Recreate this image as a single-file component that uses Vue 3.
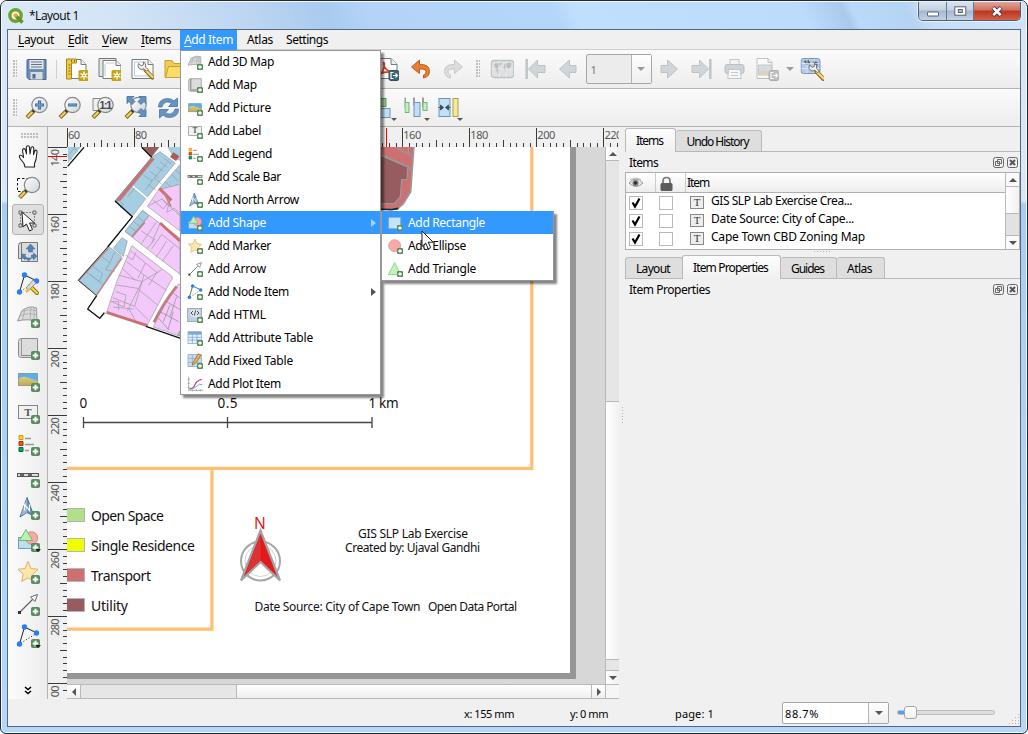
<script setup>
const vFit = {
  mounted(el, { value }) {
    const n = el.textContent.length
    const natural = el.getBoundingClientRect().width
    if (n) el.style.letterSpacing = (value - natural) / n + 'px'
  }
}

const menubar = [
  { a: 'L', b: 'ayout', w: 36, s: 50 },
  { a: 'E', b: 'dit', w: 20, s: 34 },
  { a: 'V', b: 'iew', w: 25, s: 39 },
  { a: 'I', b: 'tems', w: 30, s: 49 },
  { a: 'A', b: 'dd Item', w: 49, s: 56, on: true },
  { a: '', b: 'Atlas', w: 26, s: 47 },
  { a: '', b: 'Settings', w: 42, s: 60 }
]

const addItems = [
  ['map3d', 'Add 3D Map', 66], ['map', 'Add Map', 49], ['picture', 'Add Picture', 63],
  ['label', 'Add Label', 53], ['legend', 'Add Legend', 64], ['scale', 'Add Scale Bar', 73],
  ['north', 'Add North Arrow', 91], ['shape', 'Add Shape', 58, 'sub on'], ['marker', 'Add Marker', 63],
  ['arrow', 'Add Arrow', 58], ['node', 'Add Node Item', 81, 'sub'], ['html', 'Add HTML', 58],
  ['table', 'Add Attribute Table', 105], ['fixed', 'Add Fixed Table', 85], ['plot', 'Add Plot Item', 73]
]
const shapes = [
  ['rect', 'Add Rectangle', 77, 'on'], ['ellipse', 'Add Ellipse', 58], ['triangle', 'Add Triangle', 68]
]
const tools = ['hand', 'zoomtool', 'select', 'move', 'editnodes', 'map3d', 'map', 'picture', 'label', 'legend', 'scale', 'north', 'shape', 'marker', 'arrow', 'node']
const layers = [['GIS SLP Lab Exercise Crea...', 141], ['Date Source: City of Cape...', 143], ['Cape Town CBD Zoning Map', 154]]

const ticks = []
for (let i = 0; i < 84; i++) ticks.push({ p: 0.5 + i * 6.705, len: i % 10 === 0 ? 19 : i % 5 === 0 ? 7 : 4 })
const xNums = [60, 80, 160, 180, 200, 220].map((n) => ({ n, p: ((n - 60) / 20) * 67.05 }))
const yNums = [140, 160, 180, 200, 220, 240, 260, 280, 300].map((n, i) => ({ n, p: i * 67.05 }))
const legend = [
  { c: '#b2df8a', t: 'Open Space', w: 73, y: 508.5 }, { c: '#eeff00', t: 'Single Residence', w: 104, y: 538.5 },
  { c: '#cd7071', t: 'Transport', w: 60, y: 568.5 }, { c: '#965c60', t: 'Utility', w: 37, y: 598.5 }
]
</script>

<template>
  <div class="window">
    <svg class="defs" width="0" height="0">
      <defs>
        <linearGradient id="lens" x1="0" y1="0" x2="1" y2="1"><stop offset="0" stop-color="#fff" /><stop offset="1" stop-color="#cfd3d6" /></linearGradient>
        <linearGradient id="sand" x1="0" y1="0" x2="0" y2="1"><stop offset="0" stop-color="#d8cb84" /><stop offset="1" stop-color="#c2a94e" /></linearGradient>
        <symbol id="badge" viewBox="0 0 24 24"><rect x="15" y="15" width="9" height="9" rx="1.8" fill="#5b8d5c" /><path d="M19.5 16.7v5.6M16.7 19.5h5.6" stroke="#fff" stroke-width="2" /></symbol>
        <symbol id="star" viewBox="0 0 24 24"><rect x="14" y="13" width="11" height="11" rx="1.5" fill="#c6a312" /><path d="M19.5 14.5v8M16 16.5l7 4M16 20.5l7-4" stroke="#fff" stroke-width="1.3" /><circle cx="19.5" cy="18.5" r="1.9" fill="#fff" /><circle cx="19.5" cy="18.5" r=".8" fill="#c6a312" /></symbol>
        <symbol id="export" viewBox="0 0 24 24"><rect x="13.500" y="13.500" width="10" height="10" rx="2" fill="#3f6578" stroke="#2f4f5f" /><path d="M18 15.500h-2.500v6h2.500M17.500 18.500h4.500M20 16.500l2 2l-2 2" fill="none" stroke="#fff" stroke-width="1.200" /></symbol>
        <symbol id="save" viewBox="0 0 24 24"><path d="M2.500 3.500q0-1 1-1h18v20h-17l-2-2z" fill="#6a8db3" stroke="#46678c" /><path d="M5 3h14v9H5z" fill="#e4e8ec" /><path d="M6.500 5h11M6.500 7.500h11M6.500 10h11" stroke="#68727e" /><path d="M6 15h12v7.500H6z" fill="#d7dbe0" /><path d="M8 17h3v4.500H8z" fill="#4e6c8f" /></symbol>
        <symbol id="newlayout" viewBox="0 0 24 24"><path d="M2.500 2.500h14l5 5v14h-19z" fill="#fff" stroke="#77797a" /><path d="M16.500 2.500v5h5" fill="#eee" stroke="#77797a" /><path d="M2 2h10v4H7v16H2z" fill="#eccb42" stroke="#a78816" /><path d="M4 8h2M4 11h2M4 14h2M4 17h2M7 3v2M10 3v2" stroke="#8a7010" /><use href="#star" /></symbol>
        <symbol id="duplicate" viewBox="0 0 24 24"><path d="M1.500 1.500h17v18h-17z" fill="#e6e6e6" stroke="#77797a" /><path d="M5.500 3.500h13l5 5v13h-18z" fill="#fff" stroke="#77797a" /><path d="M18.500 3.500v5h5" fill="#eee" stroke="#77797a" /><path d="M8 6h9M7.500 7v12" stroke="#bcc8d8" /><use href="#star" /></symbol>
        <symbol id="wrench" viewBox="0 0 24 24"><path d="M15 13l7 7.500" stroke="#927018" stroke-width="4.200" stroke-linecap="round" /><path d="M15.500 13.500l6.500 6.500" stroke="#f0d878" stroke-width="2.300" stroke-linecap="round" /><path d="M8 6.500q-1.500 4 1.500 5.500q2 1 4-.2l2.500 2.500l1.700-1.700l-2.600-2.600q.9-3.500-2-5.200l-.4 3.200l-2 .8z" fill="#eee" stroke="#666" stroke-width=".9" /></symbol>
        <symbol id="manager" viewBox="0 0 24 24"><path d="M1.500 2.500h16l5 5v14h-21z" fill="#fff" stroke="#77797a" /><path d="M17.500 2.500v5h5" fill="#eee" stroke="#77797a" /><path d="M4 5h12M4 5v14h15" fill="none" stroke="#b5c9e2" /><use href="#wrench" /></symbol>
        <symbol id="folder" viewBox="0 0 24 24"><path d="M1.500 20.500v-17h7l2 3h12v14z" fill="#f0cc55" stroke="#c7a02e" /><path d="M2 20.500l3-11h19l-3 11z" fill="#fadb6c" stroke="#c7a02e" /></symbol>
        <symbol id="pdf" viewBox="0 0 24 24"><path d="M1.500 1.500h14l6 6v14h-20z" fill="#fff" stroke="#77797a" /><path d="M15.500 1.500v6h6" fill="#eee" stroke="#77797a" /><path d="M3 19q5-3 6-12q-1-4-1 0q2 7 8 8q-6-.5-13 2" fill="none" stroke="#e0402a" stroke-width="1.600" /><use href="#export" /></symbol>
        <symbol id="undo" viewBox="0 0 24 24"><path d="M3 10l8-7v4.500q10-.5 10 7q0 5-6 6.500v-3q3-1 2.500-3.500q-.5-3-6.500-2.500v4.500z" fill="#e57f35" stroke="#bd5d1b" stroke-linejoin="round" /></symbol>
        <symbol id="redo" viewBox="0 0 24 24"><path d="M21 10l-8-7v4.500q-10-.5-10 7q0 5 6 6.500v-3q-3-1-2.500-3.500q.5-3 6.500-2.500v4.500z" fill="#dadddc" stroke="#c8cbca" stroke-linejoin="round" /></symbol>
        <symbol id="atlas" viewBox="0 0 24 24"><rect x=".7" y="3.500" width="22.600" height="17" rx="3" fill="#dee0e2" stroke="#bfc2c4" stroke-width="1.300" /><path d="M3.500 7l4-1h4l-2 3l-2 1l1 4l-1 3l-2-4zM14 7l3-1h4l-1 4l-2 2l-2-2l-1 5l-2-4z" fill="#b9bec1" /><path d="M8.500 4v16M15.500 4v16M1 12h22" stroke="#eceeee" stroke-width=".8" /></symbol>
        <symbol id="prev" viewBox="0 0 24 24"><path d="M3 12l10-9v5.500h6.500v7H13V21z" fill="#d0d5d9" stroke="#bcc3c8" stroke-linejoin="round" /></symbol>
        <symbol id="next" viewBox="0 0 24 24"><path d="M21 12l-10-9v5.500H4.500v7H11V21z" fill="#d0d5d9" stroke="#bcc3c8" stroke-linejoin="round" /></symbol>
        <symbol id="first" viewBox="0 0 24 24"><path d="M5 12l9-9v5.500h7.500v7H14V21z" fill="#d0d5d9" stroke="#bcc3c8" /><path d="M3.200 2v20" stroke="#bfc5c9" stroke-width="2.500" /></symbol>
        <symbol id="last" viewBox="0 0 24 24"><path d="M19 12l-9-9v5.500H2.500v7H10V21z" fill="#d0d5d9" stroke="#bcc3c8" /><path d="M20.800 2v20" stroke="#bfc5c9" stroke-width="2.500" /></symbol>
        <symbol id="print" viewBox="0 0 24 24"><rect x="7.500" y="2.500" width="9" height="6" fill="#f4f4f4" stroke="#c2c5c7" /><rect x="2.500" y="7.500" width="19" height="9" rx="2" fill="#ced3d8" stroke="#babfc3" /><path d="M6 12.500h12l.7 9H5.300z" fill="#f7f7f7" stroke="#c2c5c7" /><path d="M8.500 15.500h7M8.500 18.500h7" stroke="#c9c9c9" /></symbol>
        <symbol id="exportimg" viewBox="0 0 24 24"><g opacity=".42"><path d="M1.500 1.500h11l4 4v16h-15z" fill="#fff" stroke="#777" /><path d="M12.500 1.500v4h4" fill="none" stroke="#777" /><path d="M3 8h13v10H3z" fill="#a7bdd0" stroke="#888" /><path d="M3 15l6-2l7 2v3H3z" fill="#b9a672" /><rect x="13.500" y="13.500" width="10" height="10" rx="2" fill="#777" stroke="#555" /><path d="M18 15.500h-2.500v6h2.500M17.500 18.500h4.500M20 16.500l2 2l-2 2" fill="none" stroke="#fff" stroke-width="1.200" /></g></symbol>
        <symbol id="atlasset" viewBox="0 0 24 24"><rect x=".5" y="1.500" width="19" height="15" rx="2.500" fill="#b4cbe8" stroke="#7797bd" /><path d="M3 4l5-1l2 3l-4 2zM12 4l5 1v4l-2 2z" fill="#536475" /><path d="M6.500 2v14M13.500 2v14M1 6.500h18M1 11.500h18" stroke="#e7f0fa" stroke-width=".7" /><g transform="translate(1 1.500)"><use href="#wrench" /></g></symbol>
        <symbol id="glass" viewBox="0 0 24 24"><path d="M9.500 14.500l-7 7" stroke="#7b641b" stroke-width="4" /><path d="M8 16l-5 5" stroke="#f3d35c" stroke-width="2.200" /><path d="M10.500 13.500l-2 2" stroke="#222" stroke-width="3" /><circle cx="15" cy="9" r="7.700" fill="url(#lens)" stroke="#858a8c" stroke-width="1.200" /></symbol>
        <symbol id="zoomin" viewBox="0 0 24 24"><use href="#glass" /><path d="M15 4.500v9M10.500 9h9" stroke="#3c6c9f" stroke-width="3.200" /><path d="M15 5.200v7.600M11.200 9h7.600" stroke="#6b9acb" stroke-width="1.600" /></symbol>
        <symbol id="zoomout" viewBox="0 0 24 24"><use href="#glass" /><path d="M10.500 9h9" stroke="#3c6c9f" stroke-width="3.200" /><path d="M11.200 9h7.600" stroke="#6b9acb" stroke-width="1.600" /></symbol>
        <symbol id="zoom100" viewBox="0 0 24 24"><path d="M2.500 2.500h17v12h-17z" fill="#eee" stroke="#8a8a8a" /><use href="#glass" /><text x="9" y="12.500" font-family="Liberation Sans" font-weight="bold" font-size="10.500" textLength="12.500" fill="#444">1:1</text></symbol>
        <symbol id="zoomfull" viewBox="0 0 24 24"><use href="#glass" /><path d="M3.500.500h7l-2 2l3 3l-3 3l-3-3l-2 2zM22.500.500v7l-2-2l-3 3l-3-3l3-3l-2-2zM22.500 20.500h-7l2-2l-3-3l3-3l3 3l2-2z" fill="#6392c1" stroke="#436d9c" stroke-width=".8" /></symbol>
        <symbol id="refresh" viewBox="0 0 24 24"><path d="M2 11q0-8 9-8.500q4 0 6.500 2.500L21 2v8.500h-9l3-3q-2-2-5-1.500Q6 7 5.500 11zM22 13q0 8-9 8.500q-4 0-6.500-2.500L3 22v-8.500h9l-3 3q2 2 5 1.500q4-1 4.500-5z" fill="#6794c3" stroke="#4674a5" stroke-width=".8" /></symbol>
        <symbol id="align" viewBox="0 0 24 24"><rect x="5.500" y="2.500" width="9" height="8" fill="#9cd09c" stroke="#649564" /><rect x="5.500" y="12.500" width="13" height="9" fill="#bfe0f6" stroke="#7295b1" /></symbol>
        <symbol id="distribute" viewBox="0 0 24 24"><path d="M.5 1.500v10M9.500 1.500v8M18.500 1.500v10" stroke="#444" /><rect x=".5" y="6.500" width="4" height="10" fill="#c3f0bf" stroke="#79b178" /><rect x="9.500" y="6.500" width="6" height="14" fill="#c0def4" stroke="#7295b1" /><rect x="18.500" y="6.500" width="4" height="8" fill="#c3f0bf" stroke="#79b178" /></symbol>
        <symbol id="resize" viewBox="0 0 24 24"><rect x="1.500" y="2.500" width="11" height="18" fill="#c0e0fa" stroke="#6f93af" /><rect x="15.500" y="2.500" width="5" height="18" fill="#f1ea99" stroke="#a7a04e" /><path d="M1 11.500h4M9 11.500h4M3 9l3 2.500L3 14zM11 9l-3 2.500l3 2.500z" stroke="#3e4c57" fill="#3e4c57" stroke-width=".9" /></symbol>
        <symbol id="hand" viewBox="0 0 24 24"><path d="M9 23l-1-3.500L4.500 15Q2.500 12 4 11.300q1.600-.6 3.600 2.200L6.500 6.500q0-1.800 1.400-1.900q1.200 0 1.600 1.800L10.500 10l-.2-6.500q.2-1.800 1.600-1.800t1.600 1.700l.5 6.600L15 4q.4-1.500 1.600-1.200t1.200 1.800l-.3 6L18.800 7q.7-1.200 1.600-.8t.6 1.800L20 15.500l-1.500 4V23z" fill="#fff" stroke="#222" stroke-width="1.100" stroke-linejoin="round" /></symbol>
        <symbol id="zoomtool" viewBox="0 0 24 24"><path d="M1.500 2.500h13v13h-13z" fill="none" stroke="#111" stroke-dasharray="2.500 2" /><g transform="translate(1 0)"><use href="#glass" /></g></symbol>
        <symbol id="select" viewBox="0 0 24 24"><path d="M4.500 4.500h14v13h-14z" fill="none" stroke="#333" stroke-dasharray="1 2" /><path d="M3 3h3v3H3zM17 3h3v3h-3zM3 16h3v3H3zM17 16h3v3h-3z" fill="#e6e6e6" stroke="#555" stroke-width=".9" /><path d="M6 4l1 15l3.500-3l3 7l3-1.500l-3-6.500h5z" fill="#fff" stroke="#222" stroke-linejoin="round" /></symbol>
        <symbol id="move" viewBox="0 0 24 24"><path d="M5.500 2.500h16v19h-16zM5.500 2.500q-3 0-3 3v13h3" fill="#dadada" stroke="#777" /><path d="M14.500 4l4.500 5h-2.500v3h-4V9H10zM6 14l4 .5l-1.200 1.200l2 2l-2 2l-2-2L5.500 19zM21 16l-3.500-3v2h-2v3h2v2zM12.500 21l-3-3h6z" fill="#4c83ba" stroke="#39658e" stroke-width=".5" /></symbol>
        <symbol id="nodes" viewBox="0 0 24 24"><path d="M3.500 20L8.500 3L21 9" fill="none" stroke="#222" /><path d="M21 9L3.500 20" stroke="#222" stroke-dasharray="1 2" /><circle cx="3.500" cy="20" r="2.700" fill="#2b7cf5" /><circle cx="8.500" cy="3" r="2.700" fill="#2b7cf5" /><circle cx="20.500" cy="9" r="2.700" fill="#2b7cf5" /></symbol>
        <symbol id="editnodes" viewBox="0 0 24 24"><use href="#nodes" /><path d="M14 14l7 7" stroke="#8d6a10" stroke-width="4" stroke-linecap="round" /><path d="M14 14l7 7" stroke="#f6ce35" stroke-width="2.400" stroke-linecap="round" /><path d="M10 16l7-8l3 3l-7 7z" fill="#d8d8d8" stroke="#888" stroke-width=".8" /><path d="M10 20l3-3" stroke="#efbc32" stroke-width="2.500" /></symbol>
        <symbol id="map3d" viewBox="0 0 24 24"><path d="M1.500 17L6 6.500Q14 1 20.500 4l.5 14q-8-4-19.500-1z" fill="#dadada" stroke="#9a9a9a" /><path d="M4 12q8-4 17-1M5.500 8q8-4 15.500-1M9 5L6.500 16M15 4l-1 12M18 4v13" fill="none" stroke="#aaa" stroke-width=".8" /><use href="#badge" /></symbol>
        <symbol id="map" viewBox="0 0 24 24"><path d="M5.500 2.500h16v17h-16zM5.500 2.500q-3 0-3 3v14q0 2 3 2h12v-2h-12z" fill="#dcdcdc" stroke="#8a8a8a" /><path d="M5.500 3v16" stroke="#999" /><use href="#badge" /></symbol>
        <symbol id="picture" viewBox="0 0 24 24"><rect x="2" y="5" width="20" height="13" fill="#59afef" /><path d="M2 11q4-3 8-2l12 4v5H2z" fill="url(#sand)" /><path d="M2.500 5.500h19v12h-19z" fill="none" stroke="#8e998d" stroke-width=".8" /><use href="#badge" /></symbol>
        <symbol id="label" viewBox="0 0 24 24"><rect x="2.500" y="5.500" width="19" height="13" fill="#f1f1f1" stroke="#858585" /><text x="11.800" y="15.500" text-anchor="middle" font-family="Liberation Serif" font-weight="bold" font-size="11" fill="#555">T</text><use href="#badge" /></symbol>
        <symbol id="legend" viewBox="0 0 24 24"><path d="M3 3.500h4v4H3z" fill="#ffd42a" stroke="#d59912" /><path d="M3 9.500h4v4H3z" fill="#f0540e" stroke="#a8350b" /><path d="M3 15.500h4v4H3z" fill="#04ad59" stroke="#076b35" /><path d="M9 6.500h6M9 12.500h9M9 18.500h4" stroke="#999" stroke-width="1.500" /><use href="#badge" /></symbol>
        <symbol id="scale" viewBox="0 0 24 24"><rect x="1.500" y="9.500" width="21" height="3" fill="#ddd" stroke="#555" /><path d="M4 11h4M12 11h4" stroke="#666" stroke-width="2" /><use href="#badge" /></symbol>
        <symbol id="north" viewBox="0 0 24 24"><path d="M11 1.500l7 18.500l-7-3.500L4 21z" fill="#668fb8" stroke="#456d93" /><path d="M11 2v14.500L4.500 20z" fill="#9db8d3" /><path d="M8.500 14.500v-6l5 6v-6" fill="none" stroke="#fff" stroke-width="1.200" /><use href="#badge" /></symbol>
        <symbol id="shape" viewBox="0 0 24 24"><rect x="2.500" y="9.500" width="14" height="11" fill="#bcdff2" stroke="#719fbc" /><circle cx="15.500" cy="10" r="6.200" fill="#f7a9a9" stroke="#df8686" /><path d="M10 1.500l6.500 11h-13z" fill="#b8f1b5" stroke="#75b574" /><use href="#badge" /></symbol>
        <symbol id="marker" viewBox="0 0 24 24"><path d="M12 1.500l3 7l7 .8l-5.200 5l1.500 7.200l-6.300-3.700l-6.300 3.700l1.500-7.200L2 9.300l7-.8z" fill="#fbe8a8" stroke="#dcae70" /><use href="#badge" /></symbol>
        <symbol id="arrow" viewBox="0 0 24 24"><path d="M3.500 20.500L18 6" stroke="#666" stroke-width="1.200" /><path d="M21.500 2.500l-7 2.500l4.500 4.500z" fill="#fff" stroke="#666" /><path d="M2 19h3v3H2z" fill="#333" /><use href="#badge" /></symbol>
        <symbol id="node" viewBox="0 0 24 24"><use href="#nodes" /><use href="#badge" /></symbol>
        <symbol id="html" viewBox="0 0 24 24"><rect x="1" y="2" width="21" height="20" fill="#bccfe3" stroke="#8093a8" /><path d="M5 4h14v10q-8 5-14-2z" fill="#e2e5e8" /><path d="M9 6L6 9l3 3M15 6l3 3l-3 3M13 5l-2 8" stroke="#333" fill="none" stroke-width="1.300" /><use href="#badge" /></symbol>
        <symbol id="table" viewBox="0 0 24 24"><rect x="1.500" y="2.500" width="20" height="18" fill="#eaf3fb" stroke="#7aa0c6" /><path d="M2 3h19v4H2z" fill="#7ba6d0" /><path d="M2 11h19M2 15h19M8 3v17M15 3v17" stroke="#7ba6d0" stroke-width="1.200" /><use href="#badge" /></symbol>
        <symbol id="fixed" viewBox="0 0 24 24"><rect x="1.500" y="2.500" width="20" height="18" fill="#cbdced" stroke="#7aa0c6" /><path d="M2 8h19M2 14h19M8 3v17" stroke="#7ba6d0" /><path d="M9 14L17 1l4 2.500l-8 12l-5 2.500z" fill="#efa94e" stroke="#80613a" /><use href="#badge" /></symbol>
        <symbol id="plot" viewBox="0 0 24 24"><path d="M2.500 1v20.500H24M1 5h3M1 11h3M1 17h3M8 20v3M14 20v3M20 20v3" stroke="#888" fill="none" /><path d="M4 19q6 0 8-6t10-8" stroke="#c2359b" fill="none" stroke-width="1.800" /><path d="M4 20q8-1 11-5t8-2" stroke="#5aa2b8" fill="none" stroke-width="1.300" /></symbol>
        <symbol id="rect" viewBox="0 0 24 24"><rect x="2.500" y="3.500" width="18" height="17" fill="#c5e4f9" stroke="#7ba8c7" /><use href="#badge" /></symbol>
        <symbol id="ellipse" viewBox="0 0 24 24"><circle cx="11.500" cy="11.500" r="9" fill="#f8aaaa" stroke="#dc8787" /><use href="#badge" /></symbol>
        <symbol id="triangle" viewBox="0 0 24 24"><path d="M11.500 2.500l9.500 18H2z" fill="#bef5bb" stroke="#79b878" /><use href="#badge" /></symbol>
      </defs>
    </svg>

    <header class="title">
      <svg class="logo" width="16" height="16" viewBox="0 0 16 16"><circle cx="7.500" cy="7.500" r="5.700" fill="#fdf3dc" stroke="#6aa52e" stroke-width="3.400" /><path d="M8 8l6.500 6.500" stroke="#5c962c" stroke-width="3.600" /><circle cx="7.500" cy="7.300" r="2" fill="#f0a23a" /></svg>
      <span v-fit="50" class="t">*Layout 1</span>
      <div class="winbtns">
        <i class="wb min"><svg width="14" height="8"><rect x="1.500" y="2" width="11" height="4" rx=".5" fill="#fff" stroke="#5a6270" /></svg></i>
        <i class="wb max"><svg width="13" height="10"><rect x=".8" y=".8" width="11" height="8.400" fill="#fff" stroke="#5a6270" /><rect x="4.300" y="3.500" width="4" height="3" fill="#aebed4" stroke="#5a6270" /></svg></i>
        <i class="wb close"><svg width="14" height="11" viewBox="0 0 14 11"><path d="M3 1.500l8 8M11 1.500l-8 8" stroke="#5a3a45" stroke-width="4.400" /><path d="M3.300 1.800l7.400 7.400M10.700 1.800L3.300 9.200" stroke="#fff" stroke-width="2.600" /></svg></i>
      </div>
    </header>

    <div class="client">
      <nav class="menubar">
        <div v-for="m in menubar" :key="m.b" class="mi" :class="[{ on: m.on }, 'm' + m.s]"><span v-fit="m.w" class="t"><u v-if="m.a">{{ m.a }}</u>{{ m.b }}</span></div>
      </nav>

      <div class="bar bar1">
        <i class="grip"></i>
        <svg class="ic"><use href="#save" /></svg><i class="sep"></i>
        <svg v-for="n in ['newlayout', 'duplicate', 'manager', 'folder']" :key="n" class="ic"><use :href="'#' + n" /></svg>
        <i class="gap1"></i>
        <svg v-for="n in ['pdf', 'undo', 'redo']" :key="n" class="ic"><use :href="'#' + n" /></svg>
        <i class="grip mid"></i>
        <svg v-for="n in ['atlas', 'first', 'prev']" :key="n" class="ic"><use :href="'#' + n" /></svg>
        <div class="combo page"><span>1</span><b><i class="tri dim"></i></b></div>
        <svg v-for="n in ['next', 'last', 'print', 'exportimg']" :key="n" class="ic"><use :href="'#' + n" /></svg>
        <i class="drop"><i class="tri dim small"></i></i>
        <svg class="ic"><use href="#atlasset" /></svg>
      </div>

      <div class="bar bar2">
        <i class="grip"></i>
        <svg v-for="n in ['zoomin', 'zoomout', 'zoom100', 'zoomfull', 'refresh']" :key="n" class="ic"><use :href="'#' + n" /></svg>
        <i class="gap2"></i>
        <div v-for="n in ['align', 'distribute', 'resize']" :key="n" class="dd"><svg class="ic"><use :href="'#' + n" /></svg><i class="tri small corner"></i></div>
      </div>

      <main class="main">
        <aside class="tools">
          <i class="hgrip"></i>
          <div v-for="n in tools" :key="n" class="tool" :class="{ on: n === 'select' }"><svg><use :href="'#' + n" /></svg><i v-if="n === 'shape' || n === 'node'" class="tri small tc"></i></div>
          <svg class="more" width="8" height="9" viewBox="0 0 8 9"><path d="M1 1l3 2.500L7 1M1 5l3 2.500L7 5" fill="none" stroke="#000" stroke-width="1.500" /></svg>
        </aside>

        <section class="view">
          <svg class="hruler" width="571" height="20">
            <g transform="translate(19 1)">
              <path v-for="t in ticks" :key="t.p" :d="`M${t.p} 19v-${t.len}`" />
              <text v-for="n in xNums" :key="n.n" :x="n.p + 1" y="11" :textLength="n.n > 99 ? 18 : 12">{{ n.n }}</text>
              <path d="M319.500 0v19" class="red" />
            </g>
          </svg>
          <svg class="vruler" width="19" height="550">
            <path v-for="t in ticks" :key="t.p" :d="`M19 ${t.p}h-${t.len}`" />
            <text v-for="n in yNums" :key="n.n" :transform="`translate(11 ${n.p + 19.500}) rotate(-90)`" textLength="17.500">{{ n.n }}</text>
            <path d="M0 9.500h19" class="red" />
          </svg>

          <svg class="canvas" width="538" height="537" viewBox="67 147 538 537">
            <rect x="67" y="147" width="538" height="537" fill="#d7d7d7" />
            <rect x="67" y="147" width="509" height="532" fill="#969696" />
            <rect x="67" y="147" width="503" height="526" fill="#fff" />

            <g transform="translate(0 125) scale(.33333)" stroke-linejoin="round">
              <path d="M203 60h45L203 116z" fill="#a6cee3" /><path d="M215 60l18 20M203 92l14 12M225 67l-22 26" stroke="#999" stroke-width="2" />
              <path d="M252 67L203 124" stroke="#111" stroke-width="4" />
              <path d="M420 60h62l-28 36z" fill="#965c60" stroke="#777" stroke-width="2" />
              <path d="M480 80l46 34l-86 104l-46-36L345 228L455 97z" fill="#a6cee3" stroke="#999" stroke-width="2" />
              <path d="M394 184l44 36l-42 55L345 228z" fill="#a6cee3" stroke="#999" stroke-width="2" />
              <path d="M396 182l46 38" stroke="#fff" stroke-width="5" />
              <path d="M455 97l8 6L362 226l-17 4z" fill="#cd7071" stroke="#999" stroke-width="2" />
              <path d="M430 150l26 18l-20 26M456 168l46-56M470 125l18 13M480 110l22 17M450 140l26 18M462 158l24 20M445 178l22 17M492 100l22 16M358 228l12 10l-8 10M405 188l-22 28" stroke="#999" stroke-width="2" fill="none" />
              <path d="M500 60h42v46l-18-6z" fill="#a6cee3" stroke="#999" stroke-width="2" />
              <path d="M520 82l18 12l-10 14l-18-12z" fill="#b0585c" />
              <path d="M541 118v54L500 210l-22-20z" fill="#a6cee3" stroke="#999" stroke-width="2" /><path d="M495 170l20 18M515 148l20 20M526 134l15 14" stroke="#999" stroke-width="2" />
              <path d="M476 194l64 -16v140L442 244z" fill="#f3c9fb" stroke="#999" stroke-width="2" />
              <path d="M428 256l112 84v108L375 320z" fill="#f3c9fb" stroke="#999" stroke-width="2" />
              <path d="M428 256l18 16l-50 60l-21-14z" fill="#a6cee3" stroke="#999" stroke-width="2" />
              <path d="M412 275l18 14M400 290l20 14M388 305l20 14M446 274l-48 60M470 290l-46 66M424 318l40 26M464 344l-24 28M480 296l-24 56M455 372l30-44l55 44M500 348l-32 50M520 362l-34 48M446 242l40 -20l20 22M460 226l30 26l20-28M486 222l54 50M510 224l-10 38M500 262l24-12l16 18" stroke="#999" stroke-width="2" fill="none" />
              <path d="M480 294l60 54M478 190l36 36" stroke="#cd7071" stroke-width="9" /><path d="M434 292L396 336M493 205l20 40" stroke="#b98488" stroke-width="5" />
              <path d="M366 338l16 10l-12 46l-30-24z" fill="#a6cee3" stroke="#999" stroke-width="2" />
              <path d="M328 366l36 28l-72 114l-56-42z" fill="#a6cee3" stroke="#999" stroke-width="2" />
              <path d="M300 390l30 24l-14 20l28 6M274 420l34 26l-10 24l-28-22M258 440l50 38M330 414l14-34" stroke="#999" stroke-width="2" fill="none" />
              <path d="M366 398L290 510M325 370L238 464" stroke="#c08c90" stroke-width="5" />
              <path d="M396 362l120 92q4 8-4 14l-72 136L320 562l30-92z" fill="#f3c9fb" stroke="#999" stroke-width="2" />
              <path d="M380 410l52 40l-28 94l-66-26M392 378l44 36l-22 46M356 450l70 20l60-36M366 430l40 36M350 480l62 10l60 50M348 500l30 10l-6 36l-34-14M432 450l68 46M436 414l34 28M404 544l40 40M426 470l-44 88M470 442l-24 40M330 530h26v26M376 390l22 14l10-22M386 550l22 40M340 546l60 6" stroke="#999" stroke-width="2" fill="none" />
              <path d="M536 476l6 6v152l-82-28q10-20 36-70z" fill="#f3c9fb" stroke="#999" stroke-width="2" />
              <path d="M530 484q-40 50-68 108" stroke="#c07f84" stroke-width="9" fill="none" /><path d="M540 618l-8 14h8z" fill="#b2df8a" stroke="#888" stroke-width="2" />
              <path d="M480 560l56 30M500 530l40 24M520 505l20 14M510 575l20-60M490 590l20-50M476 580l30 34M520 560l-16 54" stroke="#888" stroke-width="2" />
              <path d="M320 562l122 40" stroke="#cd7071" stroke-width="9" />
              <path d="M436 67l20 30L345 228l52 47L323 366L235 466l55 46L263 552l36 28l19-17" fill="none" stroke="#888" stroke-width="2" />
              <path d="M345 228l52 47L323 366M290 512L263 552l36 28l14-17M438 604l104 36M425 67l30 30" fill="none" stroke="#111" stroke-width="4" />
              <path d="M323 366L235 466l55 46" fill="none" stroke="#333" stroke-width="3" />
            </g>

            <g transform="translate(375 125) scale(.33333)">
              <path d="M0 60h117l-10 140l-22 36l-18 16H0z" fill="#cd7071" stroke="#999" stroke-width="5" />
              <path d="M0 84l98 42l-2 38H80l-4 52l-18 20H0z" fill="#965c60" stroke="#999" stroke-width="4" />
              <path d="M0 80l108 50M60 66l50 26M100 66v20" fill="none" stroke="#999" stroke-width="4" />
              <path d="M0 252l50 2l20-4" fill="none" stroke="#222" stroke-width="5" />
            </g>

            <g fill="none" stroke="#ffbf70" stroke-width="3.200"><path d="M531.800 147V468.300H67M211.900 470v159.200H67" /></g>

            <g fill="none" stroke="#444" stroke-width="1.300"><path d="M83.500 422.500H372M83.500 417v11M227.500 417v11M372 417v11" /></g>
            <g class="map-txt big"><text x="79.500" y="408">0</text><text x="217.500" y="408" textLength="20">0.5</text><text x="368.500" y="408" textLength="30">1 km</text></g>

            <g v-for="l in legend" :key="l.t">
              <rect x="60" :y="l.y" width="24.500" height="13" :fill="l.c" stroke="#b5b5b5" />
              <text class="map-txt leg" x="91" :y="l.y + 12.500" :textLength="l.w">{{ l.t }}</text>
            </g>

            <g>
              <circle cx="260.500" cy="561" r="19.500" fill="#fff" stroke="#a6a6a6" stroke-width="2" /><circle cx="260.500" cy="561" r="15.500" fill="none" stroke="#d2d2d2" />
              <path d="M260.500 530.500L241 580.500l19.500-18.500l19.500 18.500z" fill="#e31a1c" stroke="#a3a3a3" stroke-width="2.200" />
              <path d="M260.500 534v26.500L245 575z" fill="#da3335" /><text x="254" y="529" font-family="Noto Sans" font-size="15.500" textLength="11.500" fill="#e31a1c">N</text>
            </g>
            <g class="map-txt"><text x="358" y="538" textLength="110">GIS SLP Lab Exercise</text><text x="345" y="552" textLength="135">Created by: Ujaval Gandhi</text><text x="254.500" y="611" textLength="166">Date Source: City of Cape Town</text><text x="428" y="611" textLength="89">Open Data Portal</text></g>
          </svg>

          <div class="vscroll"><b><i class="tri up"></i></b><i class="groove"></i><i class="thumb"></i><i class="rest"></i><b><i class="tri"></i></b></div>
          <div class="hscroll"><b><i class="tri left"></i></b><i class="groove"></i><i class="thumb"></i><b><i class="tri right"></i></b></div>
          <div class="corner-box"></div>
        </section>

        <div class="splitter"><i></i></div>

        <aside class="dock">
          <div class="tabs top">
            <div class="tab on w51"><span v-fit="27" class="t">Items</span></div><div class="tab w86"><span v-fit="62" class="t">Undo History</span></div>
          </div>
          <div class="dtitle"><span v-fit="29" class="t">Items</span><svg class="dbtn" width="25" height="11"><g fill="#f0f0f0" stroke="#666"><rect x=".5" y=".5" width="10" height="10" rx="2" /><path d="M4.500 2.500h4v4h-4zM2.500 4.500h4v4h-4z" /><rect x="14.500" y=".5" width="10" height="10" rx="2" /></g><path d="M17 3l5 5M22 3l-5 5" stroke="#555" stroke-width="2" /></svg></div>
          <div class="tree">
            <div class="treemain">
              <div class="thead">
                <span class="c1"><svg width="16" height="12" viewBox="0 0 16 12"><path d="M1 6q7-8 14 0q-7 7-14 0z" fill="#e6e6e6" stroke="#999" /><circle cx="7.500" cy="6" r="3" fill="#777" /><circle cx="7.500" cy="6" r="1.400" fill="#222" /><path d="M2 2.500q6-3 11 0" stroke="#bbb" fill="none" /></svg></span>
                <span class="c2"><svg width="13" height="15" viewBox="0 0 13 15"><path d="M3 8V5q0-3.500 3.500-3.500T10 5v3" fill="none" stroke="#777" stroke-width="1.700" /><rect x=".5" y="7" width="12" height="8" rx="1.500" fill="#5c5c5c" /></svg></span>
                <span class="c3"><span v-fit="22" class="t">Item</span></span>
              </div>
              <div v-for="l in layers" :key="l[0]" class="trow">
                <i class="cb"><svg width="12" height="12" viewBox="0 0 12 12"><path d="M2.500 5.500l2.500 4l4.500-8" fill="none" stroke="#000" stroke-width="2.200" /></svg></i><i class="cb two"></i>
                <svg class="tico" width="14" height="13"><rect x=".5" y=".5" width="13" height="12" fill="#eee" stroke="#888" /><text x="7" y="10" text-anchor="middle" font-family="Liberation Serif" font-size="11" fill="#333">T</text></svg>
                <span v-fit="l[1]" class="t">{{ l[0] }}</span>
              </div>
            </div>
            <div class="tscroll"><b><i class="tri up"></i></b><i class="tthumb"></i><i class="tgroove"></i><b><i class="tri"></i></b></div>
          </div>
          <div class="dsplit"><i></i></div>
          <div class="tabs bottom">
            <div class="tab w57"><span v-fit="34" class="t">Layout</span></div><div class="tab on w98"><span v-fit="75" class="t">Item Properties</span></div><div class="tab w56"><span v-fit="33" class="t">Guides</span></div><div class="tab w48"><span v-fit="25" class="t">Atlas</span></div>
          </div>
          <div class="dtitle"><span v-fit="81" class="t">Item Properties</span><svg class="dbtn" width="25" height="11"><g fill="#f0f0f0" stroke="#666"><rect x=".5" y=".5" width="10" height="10" rx="2" /><path d="M4.500 2.500h4v4h-4zM2.500 4.500h4v4h-4z" /><rect x="14.500" y=".5" width="10" height="10" rx="2" /></g><path d="M17 3l5 5M22 3l-5 5" stroke="#555" stroke-width="2" /></svg></div>
        </aside>
      </main>

      <footer class="status">
        <span class="sx"><span v-fit="50" class="t">x: 155 mm</span></span><span class="sy"><span v-fit="38" class="t">y: 0 mm</span></span><span class="sp"><span v-fit="39" class="t">page: 1</span></span>
        <div class="combo zoom"><span v-fit="34" class="t">88.7%</span><b><i class="tri"></i></b></div>
        <div class="slider"><i class="fill"></i><i class="knob"></i></div>
        <svg class="sizegrip" width="12" height="12"><path d="M10.500 1v11M7.500 4v8M4.500 7v5M1.500 10v2" stroke="#b5b5b5" stroke-dasharray="1 2" /></svg>
      </footer>
    </div>

    <div class="menu main-menu">
      <div v-for="m in addItems" :key="m[1]" class="row" :class="m[3]"><svg class="mic"><use :href="'#' + m[0]" /></svg><span v-fit="m[2]" class="t">{{ m[1] }}</span><i v-if="m[3]" class="tri right"></i></div>
    </div>
    <div class="menu sub-menu">
      <div v-for="m in shapes" :key="m[1]" class="row" :class="m[3]"><svg class="mic"><use :href="'#' + m[0]" /></svg><span v-fit="m[2]" class="t">{{ m[1] }}</span></div>
    </div>
    <svg class="cursor" width="13" height="20" viewBox="0 0 13 20"><path d="M1 1v15.500l3.700-3.400l2.500 5.700l2.500-1.100l-2.500-5.500h5z" fill="#fff" stroke="#222" /></svg>
  </div>
</template>

<style>
html, body { overflow: hidden; background: #fff; }
</style>

<style scoped>
* { box-sizing: border-box; }
i { font-style: normal; display: block; flex: none; }
svg { display: block; flex: none; }
.defs { position: absolute; }
.window {
  position: relative; width: 1028px; height: 734px; border: 1px solid #1e2836; border-radius: 7px 7px 6px 6px; overflow: hidden;
  font: 12px/16px "Noto Sans", "Open Sans", sans-serif; color: #000; padding: 0 6px 6px; display: flex; flex-direction: column;
  background: linear-gradient(180deg, #d7e6f6 0, #d9e8f8 200px, #a9cdf2 203px, #b5d6f8 100%);
  box-shadow: inset 0 0 0 1px #f4faff;
}
.t { display: inline-block; white-space: pre; }
.title {
  height: 28px; margin: 0 -5px; padding: 0 0 0 6px; display: flex; align-items: center; flex: none; border-top: 1px solid #f4faff;
  font-family: "Open Sans", sans-serif;
  background: linear-gradient(65deg, #dce9f7 0, #d2e4f6 12%, #bdd6f2 24%, #a9cbef 32%, #b3d4f7 36%, #b4d6f9 54%, #bfdfff 56%, #bcdcfd 78%, #a9caea 82%, #b9dafa 83%, #b4d4f3 88%, #c6def7 90%, #d0e4f8 100%);
}
.logo { margin-right: 5px; }
.winbtns { margin: -8px 5px auto auto; height: 19px; display: flex; border: 1px solid #4f6074; border-top: 0; border-radius: 0 0 5px 5px; overflow: hidden; box-shadow: 0 0 0 1px #e5f0fb; margin-top: 0; }
.wb { height: 18px; display: flex; align-items: center; justify-content: center; background: linear-gradient(#d9e4f1 0, #c4d1e3 45%, #a5b7cf 50%, #c2d3e8 100%); border-right: 1px solid #66788e; }
.min { width: 28px; padding-top: 5px; }
.max { width: 27px; }
.close { width: 46px; border: 0; background: linear-gradient(#e0a698 0, #d07060 45%, #b83622 50%, #d5604a 100%); }

.client { flex: 1; min-height: 0; border: 1px solid #54677d; background: #f0f0f0; display: flex; flex-direction: column; }
.menubar { height: 20px; flex: none; display: flex; border-bottom: 1px solid #cfcfcf; padding-left: 2px; line-height: 19px; }
.mi { flex: none; padding-left: 8px; text-decoration-thickness: 1px; }
.mi u { text-underline-offset: 2px; }
.m50 { width: 50px; } .m34 { width: 34px; } .m39 { width: 39px; } .m49 { width: 47px; }
.m47 { width: 40px; padding-left: 10px; } .m60 { width: 60px; padding-left: 9px; }
.m56 { width: 57px; padding-left: 4px; background: #3399ff; color: #fff; height: 20px; }

.bar { display: flex; align-items: center; flex: none; background: linear-gradient(#fbfbfb, #ededed); border-bottom: 1px solid #b4b4b4; padding-left: 5px; }
.bar1 { height: 39px; } .bar2 { height: 38px; }
.ic { width: 33px; height: 24px; padding: 0 4.500px; }
.grip { width: 4px; height: 18px; margin-right: 3px; background: radial-gradient(circle at 1px 1px, #bdbdbd .7px, transparent 1px) 0 0 / 3px 3px; }
.grip.mid { margin: 0 6px; }
.sep { width: 1px; height: 19px; background: #cfcfcf; margin: 0 3px; }
.bar .grip:first-child { margin-right: 2.500px; }
.gap1 { width: 179px; }
.gap2 { width: 182px; }
.dd { position: relative; }
.corner { position: absolute; right: 3px; bottom: -1px; }
.tri { width: 0; height: 0; border: 4px solid transparent; border-top: 4px solid #555; border-bottom: 0; }
.tri.small { border-width: 3px; border-bottom-width: 0; }
.tri.dim { border-top-color: #9b9b9b; }
.tri.up { border: 4px solid transparent; border-bottom-color: #555; border-top: 0; }
.tri.left { border: 4px solid transparent; border-right-color: #555; border-left: 0; }
.tri.right { border: 4px solid transparent; border-left-color: #555; border-right: 0; }
.combo { display: flex; align-items: center; border: 1px solid #a6a6a6; border-radius: 2px; flex: none; }
.combo b { align-self: stretch; border-left: 1px solid #b4b4b4; display: flex; align-items: center; justify-content: center; background: linear-gradient(#fefefe, #efefef); width: 20px; margin-left: auto; }
.page { width: 66px; height: 30px; background: #ececec; color: #777; padding-left: 4px; font-size: 11px; margin-left: 1px; }
.page span { padding-top: 2px; }
.drop { width: 12px; padding-left: 2px; }
.drop .tri { border-width: 4px 4px 0; }

.main { flex: 1; min-height: 0; display: flex; }
.tools { width: 40px; flex: none; border-right: 1px solid #b4b4b4; background: linear-gradient(90deg, #fcfcfc, #ececec); padding: 6px 0 0 4px; display: flex; flex-direction: column; }
.hgrip { width: 17px; height: 6px; margin: 0 0 1px 9px; background: radial-gradient(circle at 1px 1px, #bdbdbd .7px, transparent 1px) 0 0 / 3px 3px; }
.tool { position: relative; width: 32px; height: 32px; padding: 4px; flex: none; }
.tool svg { width: 24px; height: 24px; }
.tool.on { border: 1px solid #b3b3b3; border-radius: 3px; background: #dedede; padding: 3px; height: 31px; margin-bottom: 1px; }
.tc { position: absolute; right: 3px; bottom: 4px; border-top-color: #222; }
.more { margin: 34px 0 0 12px; }

.view { width: 571px; flex: none; display: grid; grid-template: 20px 537px 15px / 19px 538px 14px; }
.hruler { grid-area: 1 / 1 / 2 / 4; }
.vruler { grid-area: 2 / 1 / 4 / 2; }
.hruler path, .vruler path { stroke: #3a3a3a; fill: none; shape-rendering: crispEdges; }
.hruler .red, .vruler .red { stroke: #f00; }
.hruler text, .vruler text { font: 11px "Noto Sans", sans-serif; fill: #555; }
.canvas { grid-area: 2 / 2; }
.map-txt { font: 12px "Noto Sans", sans-serif; fill: #111; }
.map-txt.big { font-size: 13.500px; } .map-txt.leg { font-size: 14px; }
.vscroll { grid-area: 2 / 3; display: flex; flex-direction: column; border-left: 1px solid #b9b9b9; }
.vscroll b { height: 13px; display: flex; align-items: center; justify-content: center; background: linear-gradient(90deg, #fff, #f0f0f0); }
.vscroll .groove { height: 242px; background: #e6e6e6; border: solid #b9b9b9; border-width: 1px 0; }
.vscroll .thumb { flex: 1; background: linear-gradient(90deg, #fff, #f1f1f1); }
.vscroll .rest { height: 12px; background: #e6e6e6; border: solid #b9b9b9; border-width: 1px 0; }
.hscroll { grid-area: 3 / 2; display: flex; border: solid #b9b9b9; border-width: 1px 0; }
.hscroll b { width: 13px; display: flex; align-items: center; justify-content: center; background: linear-gradient(#fff, #efefef); }
.hscroll .groove { width: 157px; background: #e6e6e6; border: solid #b9b9b9; border-width: 0 1px; }
.hscroll .thumb { flex: 1; background: linear-gradient(#fff, #efefef); border-right: 1px solid #b9b9b9; }
.corner-box { grid-area: 3 / 3; border: solid #b9b9b9; border-width: 1px 0 1px 1px; background: #f6f6f6; }

.splitter { width: 6px; padding: 280px 0 0 3px; flex: none; }
.splitter i { width: 1px; height: 17px; background: repeating-linear-gradient(#b5b5b5 0 1px, transparent 1px 3px); }
.dock { flex: 1; min-width: 0; display: flex; flex-direction: column; }
.tabs { display: flex; align-items: flex-end; border-bottom: 1px solid #b9b9b9; flex: none; }
.tabs.top { height: 25px; padding-left: 1px; }
.tabs.bottom { height: 25px; }
.tab { height: 21px; background: #dedede; border: 1px solid #bababa; border-left-width: 0; border-bottom: 0; border-radius: 3px 3px 0 0; display: flex; align-items: center; justify-content: center; padding: 2px 2px 0 0; }
.tab:first-child { border-left-width: 1px; }
.tab.on { height: 24px; margin-bottom: -1px; background: linear-gradient(#fdfdfd, #f0f0f0); padding: 0 2px 0 0; border-left-width: 1px; margin-left: -1px; }
.w51 { width: 51px; } .w86 { width: 86px; } .w57 { width: 58px; } .w98 { width: 99px; } .w56 { width: 56px; } .w48 { width: 48px; }
.dtitle { height: 20px; padding-left: 4px; display: flex; align-items: center; flex: none; padding-top: 2px; }
.dbtn { margin: -1px 2px 0 auto; }
.tree { height: 78px; border: 1px solid #b0b0b0; background: #fff; display: flex; flex: none; }
.treemain { flex: 1; min-width: 0; }
.thead { height: 20px; border-bottom: 1px solid #b0b0b0; background: linear-gradient(#fff, #ededed); display: flex; }
.thead > span { display: flex; align-items: center; height: 19px; }
.c1 { width: 30px; padding-left: 2px; border-right: 1px solid #ccc; }
.c2 { width: 30px; padding: 2px 0 0 4px; border-right: 1px solid #ccc; }
.c3 { padding-left: 1px; }
.trow { height: 18px; display: flex; align-items: center; padding-left: 3px; }
.trow .t { margin-top: -2px; }
.cb { width: 14px; height: 14px; border: 1px solid #b9b9b9; background: #fff; margin-top: 1px; }
.cb.two { margin-left: 16px; }
.tico { margin: 1px 7px 0 17px; }
.tscroll { width: 14px; border-left: 1px solid #b9b9b9; display: flex; flex-direction: column; }
.tscroll b { height: 13px; display: flex; align-items: center; justify-content: center; background: #fafafa; }
.tthumb { height: 28px; border: solid #b9b9b9; border-width: 1px 0; background: linear-gradient(90deg, #fff, #f0f0f0); }
.tgroove { flex: 1; background: #e2e2e2; border-bottom: 1px solid #b9b9b9; }
.dsplit { height: 4px; display: flex; justify-content: center; padding-top: 1px; }
.dsplit i { width: 17px; height: 1px; background: repeating-linear-gradient(90deg, #b5b5b5 0 1px, transparent 1px 3px); }

.status { height: 27px; flex: none; display: flex; align-items: center; padding-left: 456px; position: relative; font-size: 11px; }
.sx { width: 106px; padding-top: 3px; } .sy { width: 105px; padding-top: 3px; } .sp { width: 107px; padding-top: 3px; }
.zoom { width: 107px; height: 22px; background: #fff; padding-left: 2px; margin-top: 1px; }
.zoom .t { padding-top: 2px; }
.slider { width: 98px; height: 5px; margin: 0 0 1px 8px; border: 1px solid #bcbcbc; border-radius: 3px; background: #dedede; position: relative; }
.fill { width: 9px; height: 3px; background: #4da3f5; }
.knob { position: absolute; left: 6px; top: -5px; width: 13px; height: 13px; border: 1px solid #a5a5a5; border-radius: 3px; background: linear-gradient(#fff, #f1f1f1); }
.sizegrip { margin: auto 0 1px auto; }

.menu { position: absolute; background: #fff; border: 1px solid #979797; box-shadow: 3px 3px 2px rgba(0, 0, 0, .48); }
.main-menu { left: 179px; top: 49px; width: 201px; height: 345px; }
.sub-menu { left: 380px; top: 210px; width: 173px; height: 70px; }
.row { height: 23px; display: flex; align-items: center; padding-left: 6px; }
.row:first-child { margin-top: -1px; }
.mic { width: 16px; height: 16px; margin-right: 5px; }
.sub-menu .row { padding-left: 5px; }
.row.on { background: #3399ff; color: #fff; }
.row .tri { margin: 0 4px 0 auto; border-width: 4px 0 4px 5px; }
.row.on .tri { border-left-color: #a8d4ff; }
.cursor { position: absolute; left: 420px; top: 229px; }
</style>
